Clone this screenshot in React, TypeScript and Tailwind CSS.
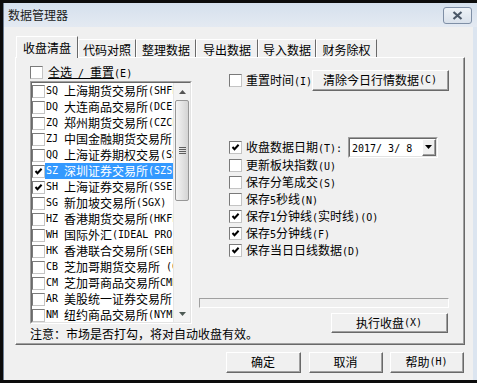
import React from "react";

// 半角字符用等宽小号字, 模拟宋体 12px 的 6px 半角宽度
const T = ({ s }: { s: string }) => (
  <>
    {s
      .split(/([\x20-\x7e]+)/)
      .filter(Boolean)
      .map((p, i) =>
        /^[\x20-\x7e]+$/.test(p) ? (
          <span key={i} className="whitespace-pre font-['DejaVu_Sans_Mono',monospace] text-[10px]">
            {p}
          </span>
        ) : (
          <span key={i}>{p}</span>
        )
      )}
  </>
);

const Check = ({ on }: { on?: boolean }) => (
  <span className="flex h-[13px] w-[13px] shrink-0 items-center justify-center border border-t-[#7a7a7a] border-l-[#7a7a7a] border-r-[#c4c4c4] border-b-[#c4c4c4] bg-white">
    {on && (
      <svg width="9" height="9" viewBox="0 0 9 9">
        <path d="M1.5 4 L3.5 6.2 L7.6 1.8" stroke="#000" strokeWidth="2" fill="none" />
      </svg>
    )}
  </span>
);

const Btn = ({ label, className }: { label: string; className: string }) => (
  <div
    className={`flex shrink-0 border border-t-white border-l-white border-r-[#696969] border-b-[#696969] bg-[#f0f0f0] ${className}`}
  >
    <div className="flex flex-1 items-center justify-center border-r border-b border-[#a0a0a0] leading-[14px] whitespace-nowrap">
      <T s={label} />
    </div>
  </div>
);

const tabs = [
  { label: "收盘清盘", w: "w-[62px]" },
  { label: "代码对照", w: "w-[58px]" },
  { label: "整理数据", w: "w-[60px]" },
  { label: "导出数据", w: "w-[62px]" },
  { label: "导入数据", w: "w-[58px]" },
  { label: "财务除权", w: "w-[61px]" },
];

const markets = [
  { code: "SQ", name: "上海期货交易所(SHFE)" },
  { code: "DQ", name: "大连商品交易所(DCE)" },
  { code: "ZQ", name: "郑州期货交易所(CZCE)" },
  { code: "ZJ", name: "中国金融期货交易所(CFFEX)" },
  { code: "QQ", name: "上海证券期权交易(SSE)" },
  { code: "SZ", name: "深圳证券交易所(SZSE)", on: true, sel: true },
  { code: "SH", name: "上海证券交易所(SSE)", on: true },
  { code: "SG", name: "新加坡交易所(SGX)" },
  { code: "HZ", name: "香港期货交易所(HKFE)" },
  { code: "WH", name: "国际外汇(IDEAL PRO)" },
  { code: "HK", name: "香港联合交易所(SEHK)" },
  { code: "CB", name: "芝加哥期货交易所 (CBOT)" },
  { code: "CM", name: "芝加哥商品交易所CME" },
  { code: "AR", name: "美股统一证券交易所" },
  { code: "NM", name: "纽约商品交易所(NYMEX)" },
];

const options = [
  { label: "更新板块指数(U)" },
  { label: "保存分笔成交(S)" },
  { label: "保存5秒线(N)" },
  { label: "保存1分钟线(实时线)(O)", on: true },
  { label: "保存5分钟线(F)", on: true },
  { label: "保存当日日线数据(D)", on: true },
];

export default function App() {
  return (
    <div className="h-[383px] w-[477px] overflow-hidden bg-[#0c0c0c] pl-[3px] pt-[3px] font-['Noto_Sans_CJK_SC',sans-serif] text-[12px] leading-[14px] text-black">
      <div className="flex h-[377px] w-[474px] flex-col border-l border-[#6d7f95]">
        {/* 标题栏 */}
        <div className="flex h-[24px] items-center bg-gradient-to-b from-[#d5e0ed] to-[#e4eaf2]">
          <span className="ml-[4px] text-[#1c1c1c]">数据管理器</span>
          <div className="ml-auto mr-[5px] flex h-[17px] w-[29px] items-center justify-center rounded-[3px] border border-[#7f8fa6] bg-gradient-to-b from-[#eef2f7] to-[#d9e1eb]">
            <svg width="11" height="9" viewBox="0 0 11 9">
              <path d="M1.5 1 L9.5 8 M9.5 1 L1.5 8" stroke="#4b5868" strokeWidth="2.2" />
            </svg>
          </div>
        </div>

        <div className="flex flex-1 flex-col border-r-4 border-[#dce5f0] bg-[#f0f0f0]">
          {/* 选项卡 */}
          <div className="ml-[12px] mt-[9px] flex h-[21px] items-end">
            {tabs.map((t, i) =>
              i === 0 ? (
                <div
                  key={t.label}
                  className={`relative z-10 -mb-px flex h-[22px] ${t.w} items-start justify-center border-t border-l border-r border-t-white border-l-white border-r-[#696969] bg-[#f0f0f0] pt-[4px]`}
                >
                  {t.label}
                </div>
              ) : (
                <div
                  key={t.label}
                  className={`flex h-[18px] ${t.w} items-start justify-center border-t border-l border-r border-t-white border-l-white border-r-[#696969] pt-[3px]`}
                >
                  {t.label}
                </div>
              )
            )}
          </div>

          {/* 面板 */}
          <div className="ml-[11px] flex h-[288px] w-[450px] border border-t-white border-l-white border-r-[#696969] border-b-[#696969]">
            <div className="flex flex-1 border-r border-b border-[#a0a0a0] pl-[14px] pt-[8px]">
              {/* 左侧市场列表 */}
              <div className="flex w-[162px] flex-col">
                <div className="flex h-[13px] items-center">
                  <Check />
                  <span className="ml-[5px] whitespace-nowrap">
                    <span className="underline">
                      <T s="全选 / 重置" />
                    </span>
                    <T s="(E)" />
                  </span>
                </div>

                <div className="mt-[2px] h-[243px] border border-t-[#a0a0a0] border-l-[#a0a0a0] border-r-white border-b-white">
                  <div className="flex h-full border border-t-[#696969] border-l-[#696969] border-r-[#e3e3e3] border-b-[#e3e3e3] bg-white">
                    <div className="w-[141px] overflow-hidden">
                      {markets.map((m) => (
                        <div key={m.code} className="flex h-[16px] items-center whitespace-nowrap">
                          <Check on={m.on} />
                          <div
                            className={`flex h-full flex-1 items-center pl-px ${m.sel ? "bg-[#3399ff] text-white" : ""}`}
                          >
                            <T s={`${m.code} ${m.name}`} />
                          </div>
                        </div>
                      ))}
                    </div>
                    {/* 滚动条 */}
                    <div className="flex w-[17px] flex-col border-l border-[#e6e6e6] bg-[#f3f3f3]">
                      <div className="flex h-[17px] items-center justify-center">
                        <svg width="7" height="4" viewBox="0 0 7 4">
                          <path d="M3.5 0 L7 4 L0 4 Z" fill="#555" />
                        </svg>
                      </div>
                      <div className="mx-[1px] flex h-[101px] flex-col items-center justify-center gap-[1px] rounded-[2px] border border-[#979797] bg-gradient-to-r from-[#f4f4f4] to-[#d4d4d4]">
                        <div className="h-px w-[7px] bg-[#5e5e5e]" />
                        <div className="h-px w-[7px] bg-[#5e5e5e]" />
                        <div className="h-px w-[7px] bg-[#5e5e5e]" />
                        <div className="h-px w-[7px] bg-[#5e5e5e]" />
                      </div>
                      <div className="flex-1" />
                      <div className="flex h-[17px] items-center justify-center">
                        <svg width="7" height="4" viewBox="0 0 7 4">
                          <path d="M0 0 L7 0 L3.5 4 Z" fill="#4e5a55" />
                        </svg>
                      </div>
                    </div>
                  </div>
                </div>

                <div className="mt-[3px] whitespace-nowrap">注意：市场是否打勾，将对自动收盘有效。</div>
              </div>

              {/* 右侧选项 */}
              <div className="ml-[7px] flex w-[250px] flex-col">
                <div className="mt-[4px] flex h-[21px] items-center">
                  <span className="ml-[30px]">
                    <Check />
                  </span>
                  <span className="ml-[4px] whitespace-nowrap">
                    <T s="重置时间(I)" />
                  </span>
                  <Btn label="清除今日行情数据(C)" className="ml-auto h-[21px] w-[137px]" />
                </div>

                <div className="mt-[46px] flex h-[21px] items-center">
                  <span className="ml-[30px]">
                    <Check on />
                  </span>
                  <span className="ml-[4px] whitespace-nowrap">
                    <T s="收盘数据日期(T):" />
                  </span>
                  <div className="ml-auto mr-[11px] flex h-[21px] w-[90px] border border-t-[#a0a0a0] border-l-[#a0a0a0] border-r-white border-b-white">
                    <div className="flex flex-1 items-center border border-t-[#696969] border-l-[#696969] border-r-[#e3e3e3] border-b-[#e3e3e3] bg-white pl-[2px]">
                      <span className="flex-1">
                        <T s="2017/ 3/ 8" />
                      </span>
                      <div className="flex h-[17px] w-[14px] border border-t-white border-l-white border-r-[#696969] border-b-[#696969] bg-[#f0f0f0]">
                        <div className="flex flex-1 items-center justify-center border-r border-b border-[#a0a0a0]">
                          <svg width="7" height="4" viewBox="0 0 7 4">
                            <path d="M0 0 L7 0 L3.5 4 Z" fill="#000" />
                          </svg>
                        </div>
                      </div>
                    </div>
                  </div>
                </div>

                <div className="-mt-px flex flex-col">
                  {options.map((o) => (
                    <div key={o.label} className="flex h-[17px] items-center pl-[30px]">
                      <Check on={o.on} />
                      <span className="ml-[4px] whitespace-nowrap">
                        <T s={o.label} />
                      </span>
                    </div>
                  ))}
                </div>

                <div className="mt-[39px] h-[10px] w-[250px] border border-t-[#a0a0a0] border-l-[#a0a0a0] border-r-white border-b-white" />

                <Btn label="执行收盘(X)" className="ml-auto mr-px mt-[5px] h-[20px] w-[117px]" />
              </div>
            </div>
          </div>

          {/* 底部按钮 */}
          <div className="ml-[222px] mt-[7px] flex h-[21px]">
            <Btn label="确定" className="h-[21px] w-[75px]" />
            <Btn label="取消" className="ml-[8px] h-[21px] w-[74px]" />
            <Btn label="帮助(H)" className="ml-[7px] h-[21px] w-[74px]" />
          </div>
        </div>
      </div>
    </div>
  );
}
